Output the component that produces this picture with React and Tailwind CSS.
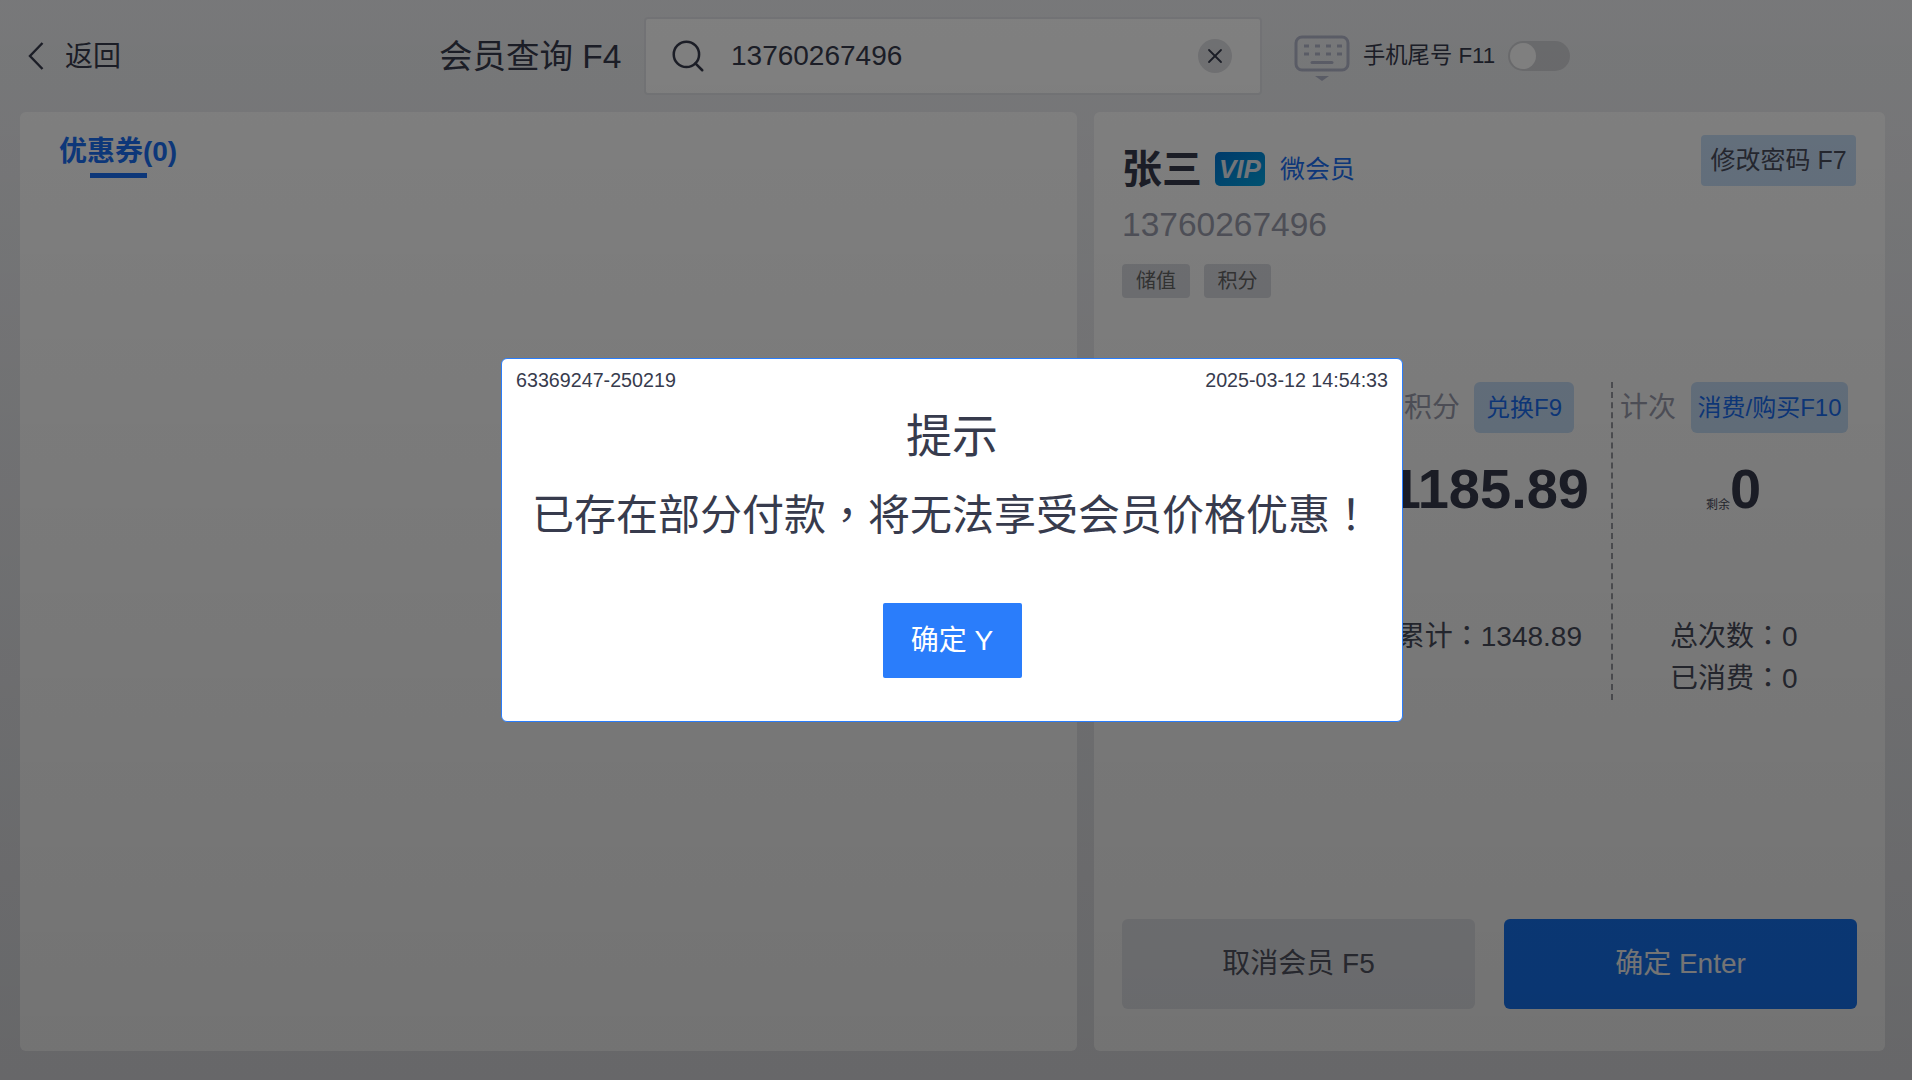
import { Search, X } from 'lucide-react';

const FONT = 'font-["Liberation_Sans","Noto_Sans_CJK_SC",sans-serif]';

// the SC face pushes full-width punctuation to the left of its cell, TC centres it
function Punct({ children }) {
  return <span className='font-["Noto_Sans_CJK_TC"] leading-none'>{children}</span>;
}

function KeyboardIcon() {
  return (
    <svg width="56" height="46" viewBox="0 0 56 46" fill="none">
      <rect x="2" y="2" width="52" height="33" rx="6" stroke="#b4b8cc" strokeWidth="3" />
      <path d="M10 11h41" stroke="#b4b8cc" strokeWidth="3" strokeDasharray="5 6" />
      <path d="M10 19h41" stroke="#b4b8cc" strokeWidth="3" strokeDasharray="5 6" />
      <path d="M18 27.5h20" stroke="#b4b8cc" strokeWidth="3" strokeLinecap="round" />
      <path d="M21 41h14l-7 5z" fill="#b4b8cc" />
    </svg>
  );
}

function Header() {
  return (
    <header className="h-[112px] flex items-center shrink-0">
      <div className="flex items-center w-[439px] pl-[28px] gap-[21px] text-[28px] text-[#373b4d]">
        <svg width="16" height="28" viewBox="0 0 16 28" fill="none">
          <path d="M14.5 1 2 14l12.5 13" stroke="#373b4d" strokeWidth="2.4" />
        </svg>
        <span className="mt-[2px]">返回</span>
      </div>
      <h1 className="w-[205px] mt-[2px] text-[33.5px] text-[#373b4d] font-normal">会员查询 F4</h1>
      <div className="w-[618px] h-[78px] flex items-center bg-white border-2 border-[#e4e5ea] rounded-[4px] pl-[23px] pr-[28px]">
        <Search size={38} strokeWidth={1.6} className="text-[#373b4d]" />
        <span className="ml-[24px] flex-1 text-[28px] text-[#373b4d]">13760267496</span>
        <span className="w-[34px] h-[34px] rounded-full bg-[#dfe0e4] flex items-center justify-center">
          <X size={24} strokeWidth={1.8} className="text-[#373b4d]" />
        </span>
      </div>
      <div className="ml-[32px] mt-[4px]">
        <KeyboardIcon />
      </div>
      <span className="ml-[13px] text-[22.3px] text-[#373b4d]">手机尾号 F11</span>
      <div className="ml-[13px] w-[62px] h-[30px] rounded-full bg-[#d3d4d8] p-[2px]">
        <div className="w-[26px] h-[26px] rounded-full bg-white" />
      </div>
    </header>
  );
}

function CouponPanel() {
  return (
    <section className="w-[1057px] bg-white rounded-[6px] pl-[39px] pt-[20px]">
      <div className="w-[118px] flex flex-col items-center">
        <span className="text-[28px] leading-[40px] font-bold text-[#1a6ff5] whitespace-nowrap">优惠券(0)</span>
        <span className="mt-[1px] w-[57px] h-[5px] bg-[#1a6ff5]" />
      </div>
    </section>
  );
}

function MemberPanel() {
  return (
    <section className="flex-1 bg-white rounded-[6px] px-[28px] pt-[23px] pb-[42px] flex flex-col">
      <div className="flex justify-between items-start">
        <div>
          <div className="flex items-center h-[46px] mt-[11px]">
            <span className="text-[40px] font-bold text-[#373b4d]">张三</span>
            <span className="ml-[13px] w-[50px] h-[34px] rounded-[5px] bg-gradient-to-br from-[#0076d8] to-[#00a6e4] flex items-center justify-center text-[26px] leading-none font-bold italic text-[#e8eef5]">
              VIP
            </span>
            <span className="ml-[15px] mt-[2px] text-[25px] text-[#1a6ff5]">微会员</span>
          </div>
          <div className="mt-[13px] text-[33.5px] leading-[40px] text-[#9da0b0]">13760267496</div>
          <div className="mt-[19px] flex gap-[14px]">
            <span className="w-[68px] h-[34px] rounded-[4px] bg-[#dcdee4] text-[20px] text-[#666666] flex items-center justify-center">储值</span>
            <span className="w-[67px] h-[34px] rounded-[4px] bg-[#dcdee4] text-[20px] text-[#666666] flex items-center justify-center">积分</span>
          </div>
        </div>
        <button className="w-[155px] h-[51px] rounded-[4px] bg-[#c8e0fa] text-[25px] text-[#4a4e5e] mr-[1px]">修改密码 F7</button>
      </div>

      <div className="mt-[84px] h-[318px] flex">
        <div className="flex-1 flex flex-col items-end">
          <div className="flex items-center gap-[14px] pr-[37px]">
            <span className="text-[28px] text-[#9da0b0]">积分</span>
            <button className="w-[100px] h-[51px] rounded-[6px] bg-[#c8e0fa] text-[24px] text-[#1a6ff5]">兑换F9</button>
          </div>
          <div className="mt-[24px] pr-[22px] text-[56px] leading-[64px] font-bold text-[#373b4d]">1185.89</div>
          <div className="mt-[95px] pr-[29px] text-[28px] leading-[42px] text-[#4a4e5e]">累计<Punct>：</Punct>1348.89</div>
        </div>
        <div className="w-[247px] mr-[-1px] border-l-2 border-dashed border-[#9a9ca3] flex flex-col">
          <div className="flex items-center gap-[15px] pl-[7px]">
            <span className="text-[28px] text-[#9da0b0]">计次</span>
            <button className="w-[157px] h-[51px] rounded-[6px] bg-[#c8e0fa] text-[24px] text-[#1a6ff5]">消费/购买F10</button>
          </div>
          <div className="mt-[24px] pl-[93px] flex items-end h-[64px] text-[#373b4d]">
            <span className="text-[12px] leading-[16px] mb-[8px] text-[#4a4e5e]">剩余</span>
            <span className="text-[56px] leading-[64px] font-bold">0</span>
          </div>
          <div className="mt-[95px] pl-[57px] text-[28px] leading-[42px] text-[#4a4e5e]">
            <div>总次数<Punct>：</Punct>0</div>
            <div>已消费<Punct>：</Punct>0</div>
          </div>
        </div>
      </div>

      <div className="mt-auto flex gap-[29px]">
        <button className="flex-1 h-[90px] rounded-[6px] bg-[#e8eaef] text-[28px] text-[#555866]">取消会员 F5</button>
        <button className="flex-1 h-[90px] rounded-[6px] bg-[#1677fa] text-[28px] text-white">确定 Enter</button>
      </div>
    </section>
  );
}

function Notice() {
  return (
    <div className="w-[902px] h-[364px] bg-white border border-[#2a7dfb] rounded-[6px] flex flex-col items-center text-[#373b4d]">
      <div className="w-full flex justify-between px-[14px] pt-[10px] text-[19.7px] leading-[22px]">
        <span>63369247-250219</span>
        <span>2025-03-12 14:54:33</span>
      </div>
      <h2 className="mt-[19px] text-[46px] leading-[52px] font-normal">提示</h2>
      <p className="mt-[28px] text-[42px] leading-[52px] whitespace-nowrap">已存在部分付款<Punct>，</Punct>将无法享受会员价格优惠<Punct>！</Punct></p>
      <button className="mt-[61px] w-[139px] h-[75px] rounded-[2px] bg-[#2a7dfb] text-[28px] text-white">确定 Y</button>
    </div>
  );
}

export default function App() {
  return (
    <div className={`relative h-[1080px] overflow-hidden bg-gradient-to-b from-[#eff0f3] to-[#e4e5e9] ${FONT}`}>
      <div className="h-full flex flex-col">
        <Header />
        <main className="h-[939px] flex gap-[17px] pl-[20px] pr-[27px]">
          <CouponPanel />
          <MemberPanel />
        </main>
      </div>
      {/* modal mask */}
      <div className="absolute inset-0 bg-gradient-to-b from-black/50 to-black/55 flex items-center justify-center pr-[8px]">
        <Notice />
      </div>
    </div>
  );
}
